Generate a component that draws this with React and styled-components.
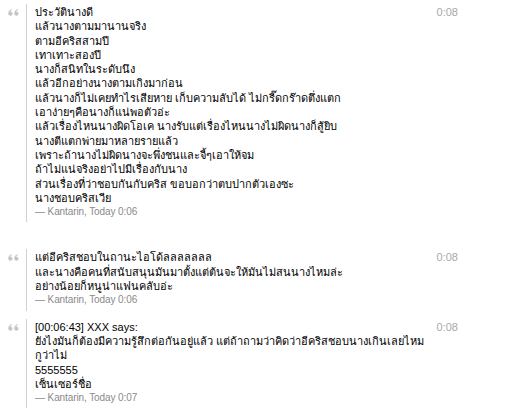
import React from "react";
import styled, { createGlobalStyle } from "styled-components";

const GlobalStyle = createGlobalStyle`
  html, body {
    margin: 0;
    padding: 0;
    background: #ffffff;
  }
  body {
    font-family: Tahoma, "Liberation Sans", "DejaVu Sans", sans-serif;
    font-size: 11px;
    color: #000;
  }
`;

const Thread = styled.div`
  width: 450px;
  padding: 4px 0 0 8px;
  display: flex;
  flex-direction: column;
`;

const Quote = styled.div`
  display: grid;
  grid-template-columns: 18px 1fr auto;
  align-items: start;
  margin-bottom: ${(p) => p.$after}px;
`;

const Mark = styled.svg`
  display: block;
  margin-top: 5px;
`;

const Body = styled.div`
  border-left: 1px solid #d0d0d0;
  padding: 1px 0 3px 8px;
`;

const Line = styled.div`
  height: 14.3px;
  line-height: 14.3px;
  white-space: nowrap;
`;

const Author = styled(Line)`
  color: #8a8a8a;
  font-size: 10px;
  letter-spacing: -0.1px;
`;

const Stamp = styled.div`
  color: #a8a8a8;
  height: 14.3px;
  line-height: 14.3px;
  margin-top: 1px;
`;

function QuoteMark() {
  return (
    <Mark width="11" height="7" viewBox="0 0 11 7">
      <path
        d="M0.3 4.6 C0.3 2.2 1.6 0.7 3.9 0.2 L4.2 1 C3 1.4 2.4 2.1 2.3 2.8 C3.6 2.8 4.5 3.6 4.5 4.8 C4.5 6 3.6 6.8 2.4 6.8 C1.1 6.8 0.3 5.9 0.3 4.6 Z"
        fill="#c4c4c4"
      />
      <path
        d="M6.3 4.6 C6.3 2.2 7.6 0.7 9.9 0.2 L10.2 1 C9 1.4 8.4 2.1 8.3 2.8 C9.6 2.8 10.5 3.6 10.5 4.8 C10.5 6 9.6 6.8 8.4 6.8 C7.1 6.8 6.3 5.9 6.3 4.6 Z"
        fill="#c4c4c4"
      />
    </Mark>
  );
}

const quotes = [
  {
    time: "0:08",
    after: 27,
    lines: [
      "ประวัตินางดี",
      "แล้วนางตามมานานจริง",
      "ตามอีคริสสามปี",
      "เทาเทาะสองปี",
      "นางก็สนิทในระดับนึง",
      "แล้วอีกอย่างนางตามเกิงมาก่อน",
      "แล้วนางก็ไม่เคยทำไรเสียหาย เก็บความลับได้ ไม่กรี๊ดกร๊าดตึ่งแตก",
      "เอาง่ายๆคือนางก็แน่พอตัวอ่ะ",
      "แล้วเรื่องไหนนางผิดโอเค นางรับแต่เรื่องไหนนางไม่ผิดนางก็สู้ยิบ",
      "นางตีแตกพ่ายมาหลายรายแล้ว",
      "เพราะถ้านางไม่ผิดนางจะพึ่งชนและจี้ๆเอาให้จม",
      "ถ้าไม่แน่จริงอย่าไปมีเรื่องกับนาง",
      "ส่วนเรื่องที่ว่าชอบกันกับคริส ขอบอกว่าตบปากตัวเองซะ",
      "นางชอบคริสเวีย",
    ],
    author: "— Kantarin, Today 0:06",
  },
  {
    time: "0:08",
    after: 8,
    lines: [
      "แต่อีคริสชอบในถานะไอโด้ลลลลลลล",
      "และนางคือคนที่สนับสนุนมันมาตั้งแต่ต้นจะให้มันไม่สนนางไหมล่ะ",
      "อย่างน้อยก็หนูน่าแฟนคลับอ่ะ",
    ],
    author: "— Kantarin, Today 0:06",
  },
  {
    time: "0:08",
    after: 0,
    lines: [
      "[00:06:43] XXX says:",
      "ยังไงมันก็ต้องมีความรู้สึกต่อกันอยู่แล้ว แต่ถ้าถามว่าคิดว่าอีคริสชอบนางเกินเลยไหม",
      "กูว่าไม่",
      "5555555",
      "เซ็นเซอร์ชื่อ",
    ],
    author: "— Kantarin, Today 0:07",
  },
];

export default function App() {
  return (
    <>
      <GlobalStyle />
      <Thread>
        {quotes.map((q, i) => (
          <Quote key={i} $after={q.after}>
            <QuoteMark />
            <Body>
              {q.lines.map((l, j) => (
                <Line key={j}>{l}</Line>
              ))}
              <Author>{q.author}</Author>
            </Body>
            <Stamp>{q.time}</Stamp>
          </Quote>
        ))}
      </Thread>
    </>
  );
}
